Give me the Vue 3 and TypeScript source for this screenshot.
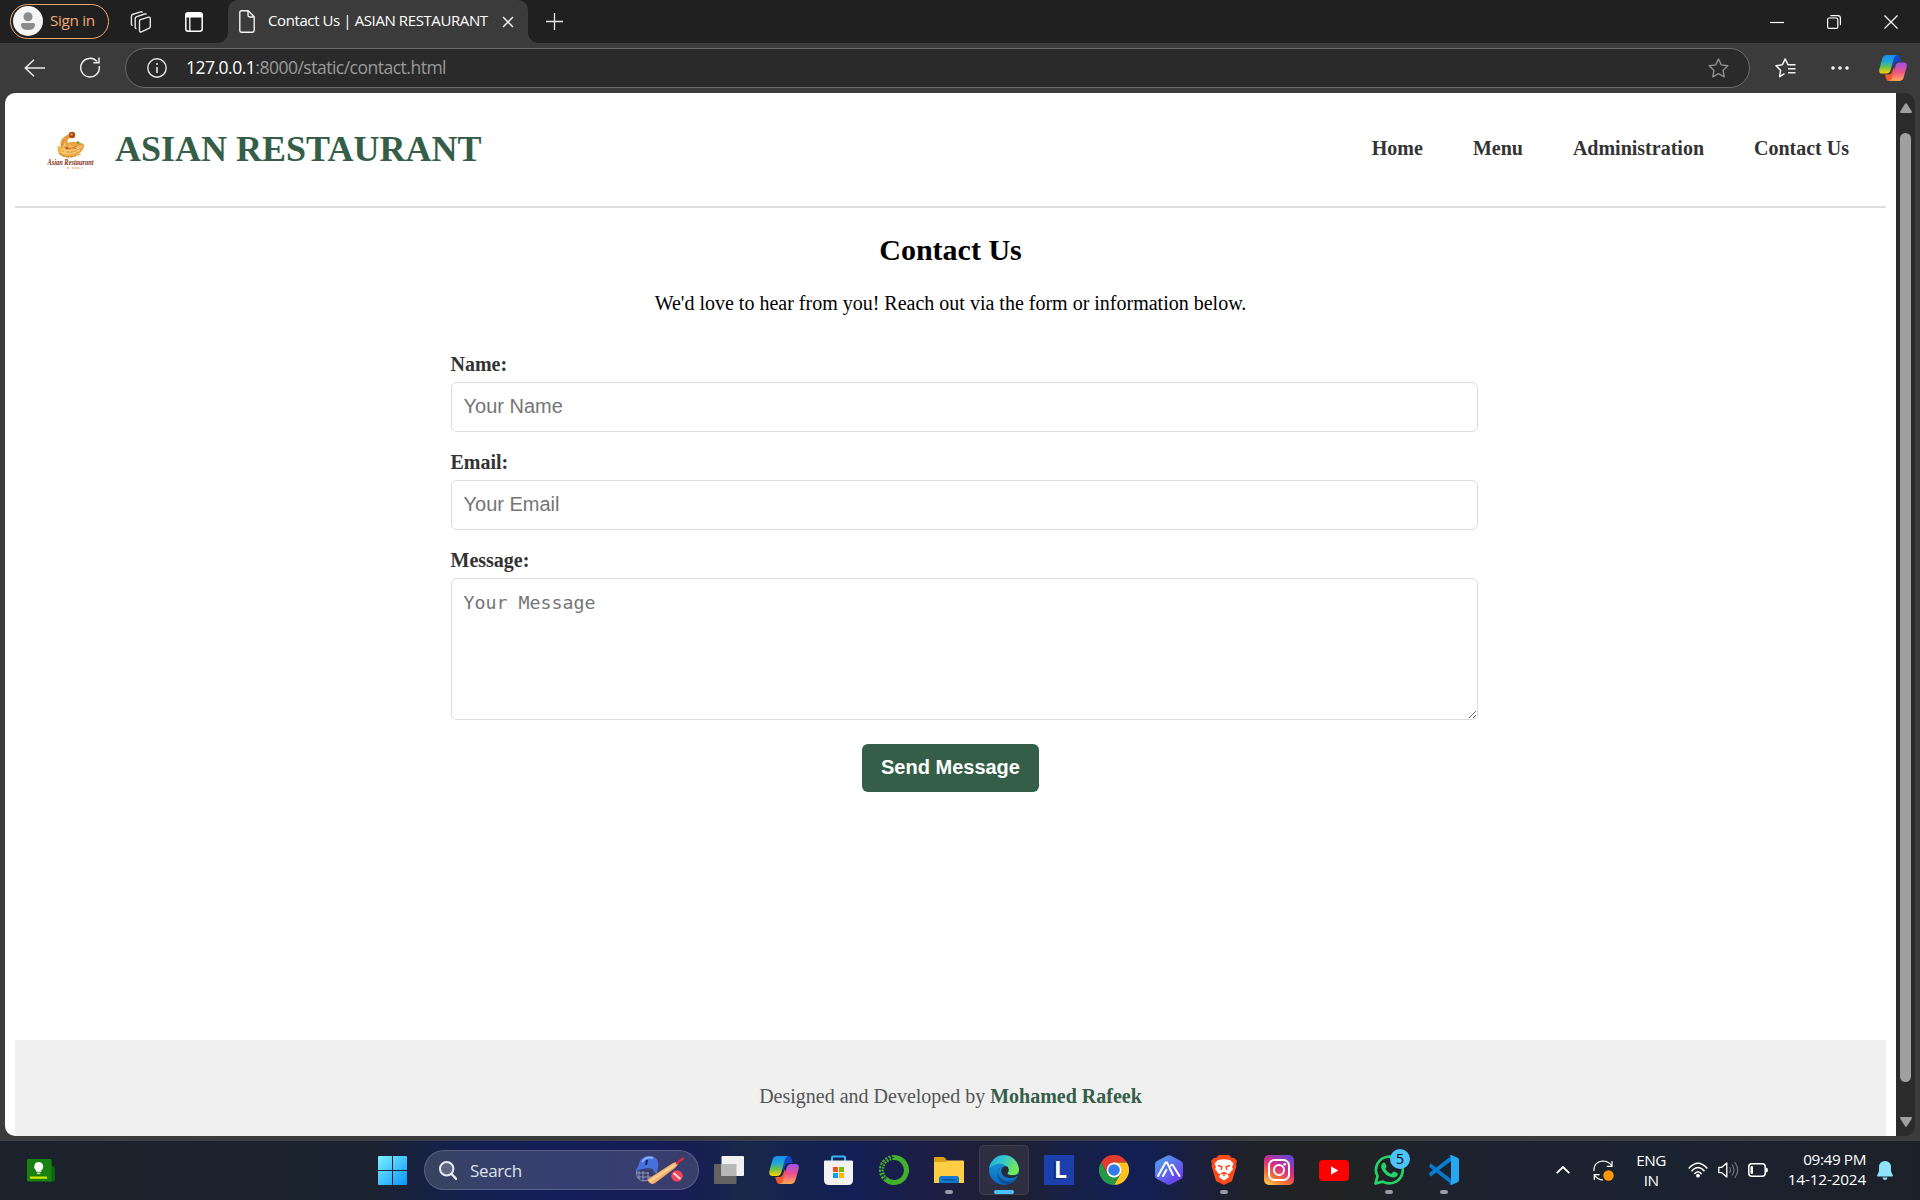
<script setup lang="ts">
interface NavLink {
  label: string
  href: string
}

interface TaskApp {
  id: string
  state?: 'open' | 'active'
  badge?: number
}

const navLinks: NavLink[] = [
  { label: 'Home', href: '#home' },
  { label: 'Menu', href: '#menu' },
  { label: 'Administration', href: '#administration' },
  { label: 'Contact Us', href: '#contact' },
]

const apps: TaskApp[] = [
  { id: 'taskview' },
  { id: 'copilot' },
  { id: 'store' },
  { id: 'anaconda' },
  { id: 'explorer', state: 'open' },
  { id: 'edge', state: 'active' },
  { id: 'letter' },
  { id: 'chrome' },
  { id: 'hex' },
  { id: 'brave', state: 'open' },
  { id: 'instagram' },
  { id: 'youtube' },
  { id: 'whatsapp', state: 'open', badge: 5 },
  { id: 'vscode', state: 'open' },
]
</script>

<template>
  <div class="desktop">
    <!-- Shared gradients and symbols -->
    <svg class="defs" width="0" height="0" aria-hidden="true">
      <defs>
        <linearGradient id="cpA" x1="0" y1="0" x2="0" y2="1"><stop offset="0" stop-color="#1a8cf0" /><stop offset=".35" stop-color="#1ba6d8" /><stop offset=".65" stop-color="#6cc04a" /><stop offset="1" stop-color="#ffd200" /></linearGradient>
        <linearGradient id="cpB" x1="0" y1="0" x2="0" y2="1"><stop offset="0" stop-color="#9a52f0" /><stop offset=".5" stop-color="#ee5088" /><stop offset="1" stop-color="#ffab55" /></linearGradient>
        <symbol id="copilot" viewBox="0 0 30 28">
          <path d="M16 0h3.500q2 0 2.700 2l1.600 5h-4q-3 0-3.800 3L14 15l-2-10z" fill="#1446c8" />
          <path d="M14 28h-3.500q-2 0-2.700-2l-1.600-5h4q3 0 3.800-3l2-5 2 10z" fill="#f4592f" />
          <path d="M8.500 0H19q-2.500.8-3.300 4l-3.200 12q-1 4-4.500 4H3.500Q-.7 20 .4 15L3.500 4q1-4 5-4z" fill="url(#cpA)" />
          <path d="M21.500 28H11q2.500-.8 3.300-4l3.200-12q1-4 4.500-4h4.500q4.200 0 3.100 5l-3.100 11q-1 4-5 4z" fill="url(#cpB)" />
        </symbol>
      </defs>
    </svg>

    <!-- Tab strip -->
    <div class="tabstrip">
      <button class="signin">
        <svg width="30" height="30" viewBox="0 0 30 30"><circle cx="15" cy="15" r="15" fill="#f5f5f5" /><circle cx="15" cy="10.700" r="4.500" fill="#8b8b8b" /><path d="M9.500 17h11q1.500 0 1.500 1.500 0 5.500-7 5.500t-7-5.500Q8 17 9.500 17z" fill="#8b8b8b" /></svg>
        <span class="signin-text">Sign in</span>
      </button>
      <svg class="ico-workspaces" width="22" height="22" viewBox="0 0 22 22" fill="none" stroke="#e6e6e6" stroke-width="1.400" stroke-linejoin="round">
        <path d="M9.500 10.200q0-1.200 1-1.600l8-2.400q1.800-.4 1.800 1.200v8.200q0 1.200-1 1.600l-7.800 3.600q-2 .6-2-1.200z" />
        <path d="M6.500 17.500q-1.300.3-1.300-1.300V7.500q0-1.200 1-1.700L14.500 3q1.700-.4 1.900.7" />
        <path d="M2.700 14.200q-1.300.2-1.300-1.300V5.200q0-1.200 1-1.700L10.500.9q1.700-.4 1.900.7" />
      </svg>
      <svg class="ico-tabs" width="18" height="20" viewBox="0 0 18 20"><rect x=".8" y=".8" width="16.400" height="18.400" rx="2.500" fill="none" stroke="#fff" stroke-width="1.500" /><path d="M1 2.500Q1 1 2.500 1h13Q17 1 17 2.500V5H1z" fill="#fff" stroke="#fff" stroke-width="1.200" /><path d="M4.800 5v14" stroke="#fff" stroke-width="1.300" /></svg>
      <div class="tab">
        <svg class="ico-file" width="16" height="23" viewBox="0 0 16 23" fill="none" stroke="#f2f2f2" stroke-width="1.400" stroke-linejoin="round"><path d="M.8 2.500Q.8.800 2.500.8h6.700l6 6v13.700q0 1.700-1.700 1.700h-11Q.8 22.200.8 20.500z" /><path d="M9 .8v4.500Q9 7 10.700 7h4.500" /></svg>
        <span class="tab-title">Contact Us | ASIAN RESTAURANT</span>
        <svg class="tab-close" width="12" height="12" viewBox="0 0 12 12" stroke="#f2f2f2" stroke-width="1.500"><path d="M1 1l10 10M11 1L1 11" /></svg>
      </div>
      <svg class="ico-plus" width="17" height="17" viewBox="0 0 17 17" stroke="#e6e6e6" stroke-width="1.300"><path d="M8.500 0v17M0 8.500h17" /></svg>
      <div class="window-controls">
        <svg width="14" height="14" viewBox="0 0 14 14" stroke="#fff" stroke-width="1.200"><path d="M0 7.500h14" /></svg>
        <svg width="14" height="14" viewBox="0 0 14 14" fill="none" stroke="#fff" stroke-width="1.200"><rect x=".6" y="3" width="10.200" height="10.400" rx="1.500" /><path d="M3.300.7h7.500q2.600 0 2.600 2.600v7" /></svg>
        <svg width="14" height="14" viewBox="0 0 14 14" stroke="#fff" stroke-width="1.200"><path d="M.5.5l13 13M13.500.5l-13 13" /></svg>
      </div>
    </div>

    <!-- Address bar -->
    <div class="toolbar">
      <svg class="ico-back" width="21" height="18" viewBox="0 0 21 18" fill="none" stroke="#ededed" stroke-width="1.500"><path d="M10 .8L1.300 9l8.700 8.200M1.300 9H21" /></svg>
      <svg class="ico-reload" width="21" height="22" viewBox="0 0 21 22" fill="none" stroke="#ededed" stroke-width="1.500"><path d="M19.200 9A9.300 9.300 0 1 1 17 4.500M19 .5v5.200h-5.700" /></svg>
      <div class="address">
        <svg class="ico-info" width="20" height="20" viewBox="0 0 20 20" fill="none" stroke="#e6e6e6"><circle cx="10" cy="10" r="9.200" stroke-width="1.400" /><path d="M10 9v6" stroke-width="1.600" /><circle cx="10" cy="6" r="1" fill="#e6e6e6" stroke="none" /></svg>
        <span class="url"><b>127.0.0.1</b><i>:8000/static/contact.html</i></span>
        <svg class="ico-star" width="21" height="20" viewBox="0 0 21 20" fill="none" stroke="#8f8f8f" stroke-width="1.400" stroke-linejoin="round"><path d="M10.500 1l2.800 5.900 6.500.9-4.700 4.500 1.100 6.500-5.700-3.100-5.700 3.100 1.100-6.500L1.200 7.800l6.500-.9z" /></svg>
      </div>
      <svg class="ico-favs" width="21" height="20" viewBox="0 0 21 20" fill="none" stroke="#f2f2f2" stroke-width="1.500" stroke-linejoin="round"><path d="M9.500 15.600l-4.900 3.100 1-6.500L1 7.800l6.300-1 2.900-5.900 2.800 5.900h7.500M13 10.800h7.500M13 14.800h7.500" /></svg>
      <svg class="ico-dots" width="18" height="4" viewBox="0 0 18 4" fill="#f2f2f2"><circle cx="2" cy="2" r="1.800" /><circle cx="9" cy="2" r="1.800" /><circle cx="16" cy="2" r="1.800" /></svg>
      <svg class="ico-copilot" width="28" height="28" viewBox="0 0 28 28"><use href="#copilot" width="28" height="28" /></svg>
    </div>

    <!-- Web page -->
    <div class="viewport">
      <div class="page">
        <header class="site-header">
          <svg class="logo" width="48" height="42" viewBox="0 0 48 42">
            <path d="M10.500 15q-1 10 8 11.500 14 1.500 19-12Q30 13 24 15t-13.500 0z" fill="#f0b347" />
            <path d="M14 16Q11 7 23 3l3 2q-7 3-5 7 6-3 16 1 0 10-13 11-8 0-10-8z" fill="#e9a544" />
            <path d="M14 18q10 5 21-3M14 21q10 4 19-2M18 12q-3 6 2 11M22 14q6 6 12-1" fill="none" stroke="#fbd98a" stroke-width="1" />
            <path d="M12 22q8 7 22 1M15 15q1-7 8-10M17 16q5 4 17-3" fill="none" stroke="#c8682a" stroke-width=".8" stroke-dasharray="3 1" />
            <circle cx="25" cy="4" r="3.200" fill="#a84a0e" /><circle cx="24.500" cy="3.500" r="1.300" fill="#e98c33" />
            <circle cx="31" cy="11.500" r="1.300" fill="#6e9232" /><circle cx="20" cy="17" r=".9" fill="#bb3e1c" /><circle cx="28" cy="17" r=".8" fill="#bb3e1c" />
            <text x="0.500" y="33.500" textLength="46" lengthAdjust="spacingAndGlyphs" font-family="'Liberation Serif', serif" font-style="italic" font-weight="bold" font-size="8.500" fill="#853116">Asian Restaurant</text>
            <path d="M20 37h2M25 37h8M35 37h1" stroke="#f3ae85" stroke-width="1.500" stroke-dasharray="2 .7" />
          </svg>
          <h1>ASIAN RESTAURANT</h1>
          <nav>
            <a v-for="link in navLinks" :key="link.label" :href="link.href">{{ link.label }}</a>
          </nav>
        </header>

        <main>
          <h2>Contact Us</h2>
          <p>We'd love to hear from you! Reach out via the form or information below.</p>
          <form @submit.prevent>
            <label for="name">Name:</label>
            <input id="name" type="text" placeholder="Your Name">
            <label for="email">Email:</label>
            <input id="email" type="email" placeholder="Your Email">
            <label for="message">Message:</label>
            <textarea id="message" placeholder="Your Message"></textarea>
          </form>
          <button class="send" type="button">Send Message</button>
        </main>

        <footer>Designed and Developed by <strong>Mohamed Rafeek</strong></footer>
      </div>
      <div class="scrollbar">
        <svg width="12" height="10" viewBox="0 0 12 10" fill="#9f9f9f"><path d="M5 .8q1-1.200 2 0l4.700 7.400Q12.300 10 11 10H1Q-.3 10 .3 8.200z" /></svg>
        <div class="thumb"></div>
        <svg width="12" height="10" viewBox="0 0 12 10" fill="#9f9f9f"><path d="M5 9.200q1 1.200 2 0l4.700-7.400Q12.300 0 11 0H1Q-.3 0 .3 1.800z" /></svg>
      </div>
    </div>

    <!-- Taskbar -->
    <div class="taskbar">
      <svg class="ico-tip" width="28" height="23" viewBox="0 0 28 23"><rect x="20" y="7" width="8" height="15.500" rx="1.500" fill="#0d640f" /><rect width="24.500" height="22.500" rx="1.200" fill="#198012" /><rect x="3" y="17.500" width="17" height="2.300" fill="#cfe600" /><path d="M11.700 3a4.600 4.600 0 0 1 2.600 8.300v1.400H9.100v-1.400A4.600 4.600 0 0 1 11.700 3z" fill="#fff" /><path d="M10 14.300h3.400" stroke="#fff" stroke-width="1.200" /></svg>
      <svg class="ico-start" width="29" height="29" viewBox="0 0 29 29">
        <defs><linearGradient id="win" x1="0" y1="0" x2="1" y2="1" gradientUnits="objectBoundingBox"><stop offset="0" stop-color="#7cf2ff" /><stop offset="1" stop-color="#0a94fb" /></linearGradient></defs>
        <path d="M0 1Q0 0 1 0h13v14H0zM15 0h13q1 0 1 1v13H15zM0 15h14v14H1q-1 0-1-1zM15 15h14v13q0 1-1 1H15z" fill="url(#win)" />
      </svg>
      <div class="search">
        <svg width="18" height="19" viewBox="0 0 18 19" fill="none" stroke="#e8eaf2"><circle cx="7.700" cy="7.700" r="6.700" stroke-width="2" fill="#ffffff30" /><path d="M12.600 13l4.600 5" stroke-width="2.400" stroke-linecap="round" /></svg>
        <span class="search-text">Search</span>
        <svg class="cricket" width="50" height="30" viewBox="0 0 50 30">
          <path d="M2 14q-2 9 5 12l8-1M4 16v8M8 16v10M13 17v8M1 18h13M2 22h14" fill="none" stroke="#929dba" stroke-width=".9" />
          <path d="M3 12Q5 0 15 1t8 12l-1 5q-3 1-4-4-8-2-17 2 0-3 2-4z" fill="#4671dd" /><path d="M7 7q4-6 11-4" fill="none" stroke="#8bb0ff" stroke-width="2" /><path d="M12 5l-1 5" stroke="#17285e" stroke-width="2" />
          <path d="M13 24L38 8q4-2 5 1-1 2-3 4L20 28q-3 2-5 0-3-2-2-4z" fill="#f4b36e" /><path d="M15 26L40 10" stroke="#ffd49c" stroke-width="2" />
          <path d="M42 8l6-4.500" stroke="#db2937" stroke-width="2.400" stroke-linecap="round" />
          <circle cx="42" cy="21" r="5.800" fill="#f04458" /><path d="M38.500 18l7 6" stroke="#fbd5e0" stroke-width="2.200" />
        </svg>
      </div>
      <div class="apps">
        <div v-for="app in apps" :key="app.id" class="app" :class="app.state">
          <svg v-if="app.id === 'taskview'" width="30" height="28" viewBox="0 0 30 28"><rect x="0" y="8" width="22.500" height="20" rx="1" fill="#626262" /><rect x="7.500" y="0" width="22.500" height="20" rx="1" fill="#f1f1f1" /><path d="M7.500 8h15v12h-15z" fill="#b8b8b8" /></svg>
          <svg v-else-if="app.id === 'copilot'" width="30" height="28"><use href="#copilot" /></svg>
          <svg v-else-if="app.id === 'store'" class="store" width="29" height="30" viewBox="0 0 29 30"><path d="M8 6V2.500Q8 1.500 9 1.500h11q1 0 1 1V6" fill="none" stroke="#37b8f2" stroke-width="2" /><path d="M0 6.500Q0 5.500 1 5.500h27q1 0 1 1V25q0 5-5 5H5q-5 0-5-5z" fill="#f2f2f2" /><path d="M9 12h5v5H9z" fill="#f25022" /><path d="M15 12h5v5h-5z" fill="#7fba00" /><path d="M9 18h5v5H9z" fill="#00a4ef" /><path d="M15 18h5v5h-5z" fill="#ffb900" /></svg>
          <svg v-else-if="app.id === 'anaconda'" width="30" height="30" viewBox="0 0 30 30" fill="none" stroke="#43b02a"><path d="M15 2.500a12.500 12.500 0 1 1-8.500 21.700" stroke-width="5" /><path d="M15 2.500A12.500 12.500 0 0 0 6.500 24.200" stroke-width="5" stroke-dasharray="2 1.200" /><path d="M15 2.500A12.500 12.500 0 0 0 6.500 24.200" stroke="#17214a" stroke-width="1" stroke-dasharray="2.500 1.500" /></svg>
          <svg v-else-if="app.id === 'explorer'" width="30" height="26" viewBox="0 0 30 26"><path d="M0 1q0-1 1-1h8q1.500 0 2.500 1.500L13 4v5H0z" fill="#dda012" /><path d="M0 5h11l2-1.500h16q1 0 1 1V26H0z" fill="#ffce45" /><path d="M5 26v-4.500Q5 19 7.500 19h15q2.500 0 2.500 2.500V26z" fill="#1179d2" /><path d="M9 22.800h12" stroke="#094b91" stroke-width="1.300" stroke-linecap="round" /></svg>
          <svg v-else-if="app.id === 'edge'" width="30" height="30" viewBox="0 0 30 30">
            <defs>
              <linearGradient id="edgeA" x1="0" y1="0" x2="1" y2=".4"><stop offset="0" stop-color="#1cabdd" /><stop offset=".5" stop-color="#37c7c8" /><stop offset="1" stop-color="#70ea55" /></linearGradient>
              <linearGradient id="edgeB" x1="0" y1="0" x2="0" y2="1"><stop offset="0" stop-color="#1da7df" /><stop offset="1" stop-color="#0b63bd" /></linearGradient>
            </defs>
            <circle cx="15" cy="15" r="15" fill="url(#edgeB)" />
            <path d="M.3 13A15 15 0 0 1 30 14q.2 6-6.500 6.300-4.700 0-5.200-2 2.700-3-.2-6.600Q11 4.500.3 13z" fill="url(#edgeA)" />
            <path d="M13 11q-8 7 0 13.500 7 5 15-1.800A15 15 0 0 1 18 29.700Q8 28 8.500 18.500 9 13.500 13 11z" fill="#0d4e96" />
            <path d="M18.500 11.500Q12.500 10.500 12.200 16q.3 6.300 8.500 7 5 0 8-2.300l1-1.700q-3 1.600-6.200 1.300-4.700 0-5.200-2 2.700-3 .2-6.800z" fill="#272a3b" />
          </svg>
          <div v-else-if="app.id === 'letter'" class="letter">L</div>
          <svg v-else-if="app.id === 'chrome'" width="30" height="30" viewBox="0 0 30 30"><path d="M2 7.500a15 15 0 0 1 26 0H15l-6.500 11z" fill="#e33b2e" /><path d="M28 7.500A15 15 0 0 1 15 30l6.500-11.200L15 7.500z" fill="#fcc21d" /><path d="M2 7.500A15 15 0 0 0 15 30l6.500-11.200h-13z" fill="#279847" /><circle cx="15" cy="15" r="7.400" fill="#fff" /><circle cx="15" cy="15" r="5.800" fill="#327bed" /></svg>
          <svg v-else-if="app.id === 'hex'" width="28" height="30" viewBox="0 0 28 30"><defs><linearGradient id="hexg" x1="0" y1="0" x2=".8" y2="1"><stop offset="0" stop-color="#4daaf0" /><stop offset="1" stop-color="#6a35e8" /></linearGradient></defs><path d="M12 .7q2-1 4 0l10 5.300q2 1.200 2 3.500v11q0 2.300-2 3.500l-10 5.300q-2 1-4 0L2 24q-2-1.200-2-3.500v-11Q0 7.200 2 6z" fill="url(#hexg)" /><path d="M3 21l7.300-13q1-1.500 2 0L18 20M11.300 15L8 21M16 10.500q1-1.500 2 0L24.500 21" fill="none" stroke="#fff" stroke-width="2" stroke-linecap="round" stroke-linejoin="round" /></svg>
          <svg v-else-if="app.id === 'brave'" width="26" height="30" viewBox="0 0 26 30"><path d="M8 0h10l3 3 2-.3L26 6l-1 3 .5 2-4.500 15-8 4-8-4L.5 11 1 9 0 6l3-3.300L5 3z" fill="#fb4a1c" /><path d="M7 5l6-.8L19 5l3.500 3.500L21 12l1 2-3.500 4.500-2 .5 1.500 3-5 3.500L8 22l1.500-3-2-.5L4 14l1-2-1.500-3.500z" fill="#fff" /><path d="M7 10.500l4 1.500-1 3M19 10.500L15 12l1 3M10 19l3-1.500 3 1.500M13 17v4" fill="none" stroke="#fb4a1c" stroke-width="1.400" /></svg>
          <svg v-else-if="app.id === 'instagram'" width="30" height="30" viewBox="0 0 30 30"><defs><linearGradient id="ig" x1=".15" y1="1" x2=".7" y2="0"><stop offset="0" stop-color="#fdc84e" /><stop offset=".28" stop-color="#f47137" /><stop offset=".6" stop-color="#d62d82" /><stop offset="1" stop-color="#6b44cd" /></linearGradient></defs><rect width="30" height="30" rx="5" fill="url(#ig)" /><g fill="none" stroke="#fff" stroke-width="2"><rect x="5" y="5" width="20" height="20" rx="5.500" /><circle cx="15" cy="15" r="5" /></g><circle cx="20.700" cy="9.300" r="1.400" fill="#fff" /></svg>
          <svg v-else-if="app.id === 'youtube'" width="30" height="21" viewBox="0 0 30 21"><rect width="30" height="21" rx="4" fill="#f00" /><path d="M12 6.200v8.600l7.200-4.300z" fill="#fff" /></svg>
          <svg v-else-if="app.id === 'whatsapp'" width="30" height="30" viewBox="0 0 30 30"><path d="M1.500 28.500l2-7.300A13.400 13.400 0 1 1 8.700 26.600z" fill="none" stroke="#25d366" stroke-width="2.700" stroke-linejoin="round" /><path d="M9.200 7.800q1.400-.8 2 .4l1.300 3q.3.900-1.300 2.500 2 3.700 6 5.300l1.800-2q.7-.8 1.600-.3l2.700 1.300q.8.500.5 1.500-1.300 3.500-4.800 3-8.200-1.500-11.500-9-1.100-3.800 1.700-5.700z" fill="#25d366" /></svg>
          <svg v-else width="30" height="30" viewBox="0 0 30 30"><path d="M1.500 8.200L22 24v5L.3 12q-.5-.8.200-1.500z" fill="#0a78c6" /><path d="M1.500 21.800L22 6V1L.3 18q-.5.800.2 1.500z" fill="#087fd0" /><path d="M20.500.7Q22-.2 23 .3l6 2.800q1 .4 1 1.700v20.400q0 1.300-1 1.700l-6 2.800q-1.300.5-2.500-.6L22 28V2z" fill="#27a7f2" /></svg>
          <span v-if="app.badge" class="badge">{{ app.badge }}</span>
        </div>
      </div>
      <div class="tray">
        <svg class="ico-chev" width="14" height="8" viewBox="0 0 14 8" fill="none" stroke="#fff" stroke-width="1.800"><path d="M.7 7.200L7 1l6.300 6.200" /></svg>
        <svg class="ico-sync" width="21" height="21" viewBox="0 0 21 21" fill="none" stroke="#fff" stroke-width="1.200"><path d="M.8 11Q.8 2 9.500 1q6 0 9.300 4.800M19 1v5.300h-5.300M10 19.800q-5 0-8.500-4.500M1.300 20v-5.300h5.300" /><circle cx="15.500" cy="15.500" r="5.200" fill="#ff9800" stroke="none" /></svg>
        <div class="lang"><span>ENG</span><span>IN</span></div>
        <svg class="ico-wifi" width="20" height="16" viewBox="0 0 20 16" fill="none" stroke="#fff" stroke-width="1.500"><path d="M.7 6.500q9.300-10.500 18.600 0M3.500 9.300q6.500-7.500 13 0M6.300 12q3.700-4.500 7.400 0" /><circle cx="10" cy="13.700" r="1.900" fill="#fff" stroke="none" /></svg>
        <svg class="ico-vol" width="21" height="18" viewBox="0 0 21 18" fill="none" stroke="#fff" stroke-width="1.300" stroke-linejoin="round"><path d="M.8 6.300h3L8.800 2v14l-5-4.300h-3z" /><g stroke="#70747c" stroke-width="1.200"><path d="M11.500 6q2 3 0 6M14 3.500q4 5.500 0 11M16.700 1q6 8 0 16" /></g></svg>
        <svg class="ico-bat" width="20" height="14" viewBox="0 0 20 14"><rect x=".8" y=".8" width="16.400" height="12.400" rx="3" fill="none" stroke="#fff" stroke-width="1.500" /><rect x="2.500" y="3" width="2.500" height="8" rx="1" fill="#fff" /><path d="M18 4.500q2 0 2 2.500t-2 2.500z" fill="#fff" /></svg>
        <div class="clock"><span class="time">09:49 PM</span><span class="date">14-12-2024</span></div>
        <svg class="ico-bell" width="16" height="19" viewBox="0 0 16 19" fill="#8fe3fb"><path d="M8 0q6 0 6 6.500v4l1.800 3.800q.5 1.200-.8 1.200H1q-1.300 0-.8-1.200L2 10.500v-4Q2 0 8 0zM5.500 16.500h5q-.5 2.500-2.500 2.500t-2.500-2.500z" /></svg>
      </div>
    </div>
  </div>
</template>

<style>
body {
  margin: 0;
  overflow: hidden;
}
</style>

<style scoped>
* {
  box-sizing: border-box;
}
svg {
  display: block;
  flex: none;
}
.defs {
  position: absolute;
}
.desktop {
  width: 1920px;
  height: 1200px;
  display: flex;
  flex-direction: column;
  background: #3b3b3b;
  font-family: 'Open Sans', 'Noto Sans', sans-serif;
  overflow: hidden;
}

/* Tab strip */
.tabstrip {
  height: 43px;
  flex: none;
  display: flex;
  align-items: center;
  background: #202020;
}
.signin {
  display: flex;
  align-items: center;
  gap: 7px;
  width: 99px;
  height: 35px;
  margin: 0 0 1px 10px;
  padding: 0 0 0 2px;
  border: 1.500px solid #f0a870;
  border-radius: 18px;
  background: none;
  color: #f0a870;
  font: 15.300px 'Open Sans', sans-serif;
}
.signin-text {
  margin-top: -2px;
  letter-spacing: -0.350px;
  white-space: nowrap;
}
.ico-workspaces {
  margin-left: 21px;
}
.ico-tabs {
  margin-left: 33px;
}
.tab {
  position: relative;
  align-self: flex-end;
  display: flex;
  align-items: center;
  width: 300px;
  height: 43px;
  margin-left: 25px;
  padding-left: 11px;
  background: #3b3b3b;
  border-radius: 10px 10px 0 0;
  color: #fff;
}
.tab::before,
.tab::after {
  content: '';
  position: absolute;
  bottom: 0;
  width: 10px;
  height: 10px;
}
.tab::before {
  right: 100%;
  background: radial-gradient(circle at 0 0, transparent 9.500px, #3b3b3b 10px);
}
.tab::after {
  left: 100%;
  background: radial-gradient(circle at 100% 0, transparent 9.500px, #3b3b3b 10px);
}
.tab-title {
  width: 220px;
  margin: -3px 0 0 13px;
  font-size: 15px;
  letter-spacing: -0.400px;
  white-space: nowrap;
}
.tab-close {
  margin-left: 14px;
}
.ico-plus {
  margin-left: 18px;
}
.window-controls {
  display: flex;
  gap: 43px;
  margin-left: auto;
  margin-right: 22px;
}

/* Toolbar */
.toolbar {
  height: 50px;
  flex: none;
  display: flex;
  align-items: center;
}
.ico-back {
  margin: 0 0 0 24px;
}
.ico-reload {
  margin-left: 35px;
}
.address {
  display: flex;
  align-items: center;
  width: 1625px;
  height: 40px;
  margin-left: 24px;
  padding: 0 20px 0 21px;
  border: 1px solid #6a6a6a;
  border-radius: 20px;
  background: #2a2a2a;
}
.url {
  margin: -2px 0 0 19px;
  font-size: 17.500px;
  letter-spacing: -0.500px;
  color: #9a9a9a;
  white-space: nowrap;
}
.url b,
.url i {
  font-weight: 400;
  font-style: normal;
}
.url b {
  color: #fff;
}
.ico-star {
  margin-left: auto;
}
.ico-favs {
  margin-left: 25px;
}
.ico-dots {
  margin-left: 35px;
}
.ico-copilot {
  margin-left: 30px;
}

/* Page */
.viewport {
  display: flex;
  height: 1043px;
  flex: none;
  margin: 0 5px;
  border-radius: 10px;
  overflow: hidden;
  background: #2b2b2b;
}
.page {
  width: 1891px;
  padding: 0 10px;
  display: flex;
  flex-direction: column;
  background: #fff;
  font-family: 'Liberation Serif', serif;
  font-size: 20px;
}
.site-header {
  display: flex;
  align-items: center;
  height: 115px;
  flex: none;
  padding: 0 37px 2px 32px;
  border-bottom: 2px solid #ddd;
}
.logo {
  margin-top: 6px;
  overflow: visible;
}
h1 {
  margin: 0 0 0 20px;
  font-size: 36px;
  color: #355e48;
}
nav {
  display: flex;
  gap: 50px;
  margin-left: auto;
}
nav a {
  color: #333;
  font-weight: bold;
  text-decoration: none;
}
main {
  flex: 1;
  display: flex;
  flex-direction: column;
  align-items: center;
  padding-top: 25px;
}
h2 {
  margin: 0;
  font-size: 30px;
  line-height: 34px;
}
p {
  margin: 25px 0 38px;
  line-height: 23px;
}
form {
  width: 1000px;
  display: flex;
  flex-direction: column;
}
label {
  height: 23px;
  margin-bottom: 6px;
  line-height: 23px;
  font-weight: bold;
  color: #333;
}
input,
textarea {
  width: 1027px;
  height: 50px;
  margin: 0 0 19px;
  padding: 12px;
  border: 1px solid #ddd;
  border-radius: 6px;
  font: 20px 'Liberation Sans', sans-serif;
}
input {
  padding-bottom: 14px;
}
textarea {
  height: 142px;
  margin-bottom: 24px;
  font: 18.270px/23px 'DejaVu Sans Mono', monospace;
}
::placeholder {
  color: #757575;
}
.send {
  width: 177px;
  height: 48px;
  padding: 0 0 2px;
  border: 0;
  border-radius: 6px;
  background: #355e48;
  color: #fff;
  font: bold 20px 'Liberation Sans', sans-serif;
}
footer {
  height: 96px;
  flex: none;
  padding-top: 45px;
  background: #f0f0f0;
  color: #555;
  text-align: center;
  line-height: 23px;
}
footer strong {
  color: #355e48;
}
.scrollbar {
  width: 19px;
  display: flex;
  flex-direction: column;
  align-items: center;
  padding: 10px 0 9px;
}
.thumb {
  width: 11px;
  height: 949px;
  margin: 20px 0 35px;
  border-radius: 6px;
  background: #9f9f9f;
}

/* Taskbar */
.taskbar {
  height: 60px;
  flex: none;
  margin-top: 4px;
  padding-bottom: 1px;
  display: flex;
  align-items: center;
  border-top: 1px solid #3a3f4c;
  background: linear-gradient(90deg, #1c222b 0, #1b2330 370px, #142050 470px, #141e58 560px, #171c54 680px, #17284a 745px, #131f55 850px, #1c1e45 930px, #211f2e 1010px, #182044 1060px, #121f55 1140px, #1a1f3b 1200px, #202128 1250px, #222 1340px, #1c222e 1440px, #1b2230 1650px, #1c2129 1920px);
  color: #fff;
}
.ico-tip {
  margin-left: 27px;
}
.ico-start {
  margin-left: 323px;
}
.search {
  display: flex;
  align-items: center;
  width: 275px;
  height: 40px;
  margin-left: 17px;
  padding: 0 13px 0 14px;
  border: 1px solid #ffffff2a;
  border-radius: 20px;
  background: #ffffff26;
}
.search-text {
  margin: 0 0 0 13px;
  font-size: 17px;
  letter-spacing: -0.350px;
  color: #dfe1ea;
}
.cricket {
  margin-left: auto;
}
.apps {
  display: flex;
  gap: 5px;
  margin-left: 5px;
}
.app {
  position: relative;
  display: flex;
  align-items: center;
  justify-content: center;
  width: 50px;
  height: 50px;
  border-radius: 5px;
}
.store {
  margin-right: 1px;
}
.letter {
  width: 30px;
  height: 30px;
  padding-left: 3px;
  background: #1c3fae;
  font-size: 23px;
  font-weight: bold;
  line-height: 28px;
  text-align: center;
  text-shadow: -2px 1px 0 #0d2a6c;
}
.app.active {
  background: #ffffff12;
  box-shadow: inset 0 0 0 1px #ffffff14;
}
.app.open::after,
.app.active::after {
  content: '';
  position: absolute;
  bottom: 1px;
  width: 8px;
  height: 4px;
  border-radius: 2px;
  background: #9799a5;
}
.app.active::after {
  width: 20px;
  background: #4cc2ff;
}
.badge {
  position: absolute;
  top: 4px;
  right: 4px;
  width: 20px;
  height: 20px;
  border-radius: 50%;
  background: #4cc2ff;
  color: #000;
  font-size: 14px;
  line-height: 20px;
  text-align: center;
}
.tray {
  display: flex;
  align-items: center;
  margin-left: auto;
  margin-right: 27px;
  font-size: 15.300px;
  line-height: 20px;
}
.ico-sync {
  margin-left: 23px;
}
.lang,
.clock {
  display: flex;
  flex-direction: column;
  white-space: nowrap;
}
.lang {
  width: 30px;
  margin: -1px 1px 0 22px;
  align-items: center;
  letter-spacing: -0.600px;
}
.ico-wifi {
  margin-left: 21px;
}
.ico-vol {
  margin-left: 10px;
}
.ico-bat {
  margin-left: 9px;
}
.clock {
  width: 80px;
  margin: -3px 0 0 18px;
  align-items: flex-end;
  letter-spacing: -0.400px;
}
.date {
  letter-spacing: -0.160px;
}
.ico-bell {
  margin-left: 11px;
}
</style>
